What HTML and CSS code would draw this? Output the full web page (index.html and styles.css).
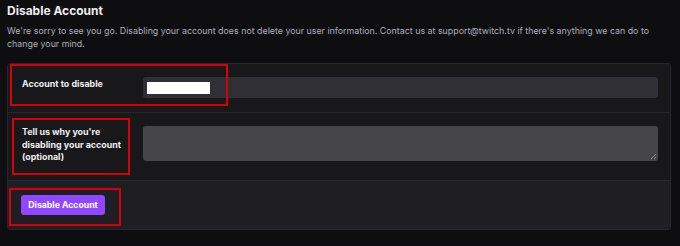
FILE: index.html
```html
<!DOCTYPE html>
<html>
<head>
<meta charset="utf-8">
<link rel="stylesheet" href="styles.css">
</head>
<body>
<div class="page">
  <h1 class="title">Disable Account</h1>
  <p class="desc">We're sorry to see you go. Disabling your account does not delete your user information. Contact us at support@twitch.tv if there's anything we can do to change your mind.</p>
  <div class="panel">
    <div class="row row-one">
      <div class="label">Account to disable</div>
      <div class="field">
        <div class="input"><span class="redact"></span></div>
      </div>
      <span class="mark mark-one"></span>
    </div>
    <div class="row row-two">
      <div class="label">Tell us why you're disabling your account (optional)</div>
      <div class="field">
        <div class="textarea"><svg class="grip" width="7" height="7" viewBox="0 0 7 7"><path d="M6 1 L1 6 M6 4 L4 6" stroke="#8a8a90" stroke-width="1"/></svg></div>
      </div>
      <span class="mark mark-two"></span>
    </div>
    <div class="footer">
      <button class="btn">Disable Account</button>
      <span class="mark mark-three"></span>
    </div>
  </div>
</div>
</body>
</html>
```
FILE: styles.css
```css
html, body {
  margin: 0;
  padding: 0;
  background: #0e0e10;
}
body {
  font-family: Inter, "Noto Sans", sans-serif;
  color: #efeff1;
  width: 680px;
  height: 246px;
  overflow: hidden;
}
.page {
  padding: 3px 9px 0 7px;
}
.title {
  margin: 0;
  font-size: 12px;
  font-weight: 700;
  line-height: 16px;
  color: #efeff1;
}
.desc {
  margin: 5px 0 0 0;
  font-size: 8.85px;
  line-height: 13px;
  color: #adadb8;
  width: 660px;
}
.panel {
  margin-top: 13px;
  background: #18181b;
  border: 1px solid #26262b;
  border-radius: 3px;
  width: 664px;
  box-sizing: border-box;
}
.row {
  position: relative;
  display: flex;
  align-items: flex-start;
  padding: 13px 12px 0 14px;
  border-bottom: 1px solid #26262b;
  box-sizing: border-box;
}
.row-one {
  height: 49px;
}
.row-two {
  height: 68px;
}
.label {
  width: 121px;
  flex: none;
  font-size: 8.9px;
  font-weight: 700;
  line-height: 12.5px;
  color: #efeff1;
  padding-top: 1px;
}
.row-two .label {
  padding-top: 0;
  width: 108px;
  margin-right: 13px;
}
.field {
  flex: 1;
}
.input {
  height: 21px;
  background: #2f2f35;
  border-radius: 3px;
  display: flex;
  align-items: center;
  padding-left: 4px;
}
.redact {
  width: 63px;
  height: 12px;
  background: #ffffff;
}
.textarea {
  position: relative;
  height: 35px;
  background: #464649;
  border-radius: 3px;
}
.grip {
  position: absolute;
  right: 1px;
  bottom: 1px;
}
.footer {
  position: relative;
  background: #1f1f23;
  height: 48px;
  padding: 14px 0 0 13px;
  box-sizing: border-box;
  border-radius: 0 0 3px 3px;
}
.btn {
  display: block;
  background: #9147ff;
  color: #ffffff;
  border: none;
  border-radius: 3px;
  font-family: Inter, "Noto Sans", sans-serif;
  font-size: 8.7px;
  font-weight: 700;
  height: 20px;
  width: 84px;
  padding: 0;
  line-height: 20px;
  text-align: center;
}
.mark {
  position: absolute;
  border: 2px solid #d4000c;
  box-sizing: border-box;
}
.mark-one {
  left: 2px;
  top: 0;
  width: 218px;
  height: 42px;
}
.mark-two {
  left: 4px;
  top: 5px;
  width: 118px;
  height: 57px;
}
.mark-three {
  left: 1px;
  top: 7px;
  width: 112px;
  height: 38px;
}
```
